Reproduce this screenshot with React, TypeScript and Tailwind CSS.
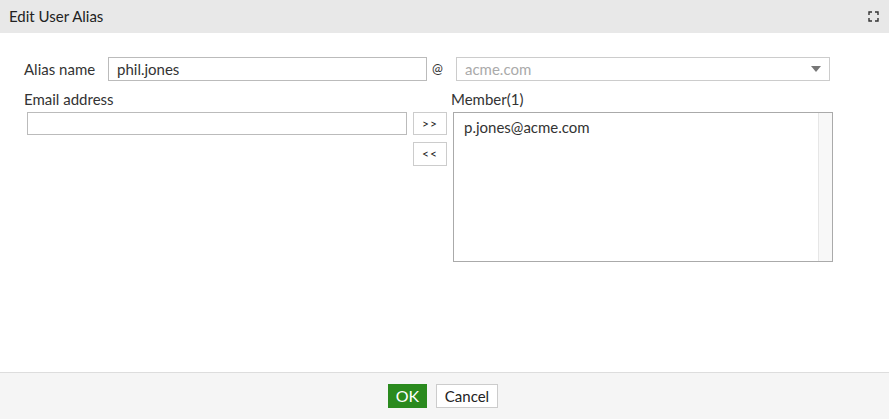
import React from 'react';

export default function App() {
  return (
    <div className="flex h-[419px] w-[889px] flex-col bg-white text-[15px] text-[#333] [font-family:Lato,'Liberation_Sans',sans-serif]">
      <div className="flex h-[33px] items-center justify-between bg-[#e8e8e8] pl-[9px] pr-[10px]">
        <span className="text-[15px] text-[#222]">Edit User Alias</span>
        <svg width="11" height="11" viewBox="0 0 11 11" fill="none" stroke="#333" strokeWidth="1.4">
          <path d="M1 4V1h3M7 1h3v3M10 7v3H7M4 10H1V7" />
        </svg>
      </div>

      <div className="flex-1 pl-[24px] pt-[24px]">
        <div className="flex h-[24px] items-center">
          <span className="w-[84px]">Alias name</span>
          <div className="flex h-[24px] w-[319px] items-center border border-[#bbb] px-[8px]">phil.jones</div>
          <span className="w-[29px] pl-[5px] text-[13px]">@</span>
          <div className="flex h-[24px] w-[374px] items-center justify-between border border-[#ccc] pl-[8px] pr-[8px] text-[#aaa]">
            <span>acme.com</span>
            <svg width="10" height="6" viewBox="0 0 10 6">
              <path d="M0 0h10L5 6z" fill="#777" />
            </svg>
          </div>
        </div>

        <div className="mt-[7px] flex">
          <div className="flex flex-col">
            <span className="h-[24px] leading-[22px]">Email address</span>
            <div className="ml-[3px] h-[23px] w-[380px] border border-[#bbb]" />
          </div>
          <div className="ml-[6px] flex flex-col gap-[7px] pt-[24px]">
            <button className="flex h-[23px] w-[34px] items-center justify-center border border-[#ccc] bg-white text-[12px] tracking-[1px] text-[#222]">&gt;&gt;</button>
            <button className="flex h-[24px] w-[34px] items-center justify-center border border-[#ccc] bg-white text-[12px] tracking-[1px] text-[#222]">&lt;&lt;</button>
          </div>
          <div className="ml-[4px] flex flex-col">
            <span className="h-[24px] leading-[22px]">Member(1)</span>
            <div className="ml-[2px] flex h-[150px] w-[380px] border border-[#aaa]">
              <div className="flex-1 px-[10px] pt-[3px]">p.jones@acme.com</div>
              <div className="w-[14px] border-l border-[#e6e6e6] bg-[#f8f8f8]" />
            </div>
          </div>
        </div>
      </div>

      <div className="flex h-[47px] items-center justify-center gap-[9px] border-t border-[#ddd] bg-[#f5f5f5] pr-[3px]">
        <button className="h-[24px] w-[39px] bg-[#2a8a1e] text-[16px] text-white">OK</button>
        <button className="h-[24px] w-[62px] border border-[#ccc] bg-white text-[15px] text-[#222]">Cancel</button>
      </div>
    </div>
  );
}
